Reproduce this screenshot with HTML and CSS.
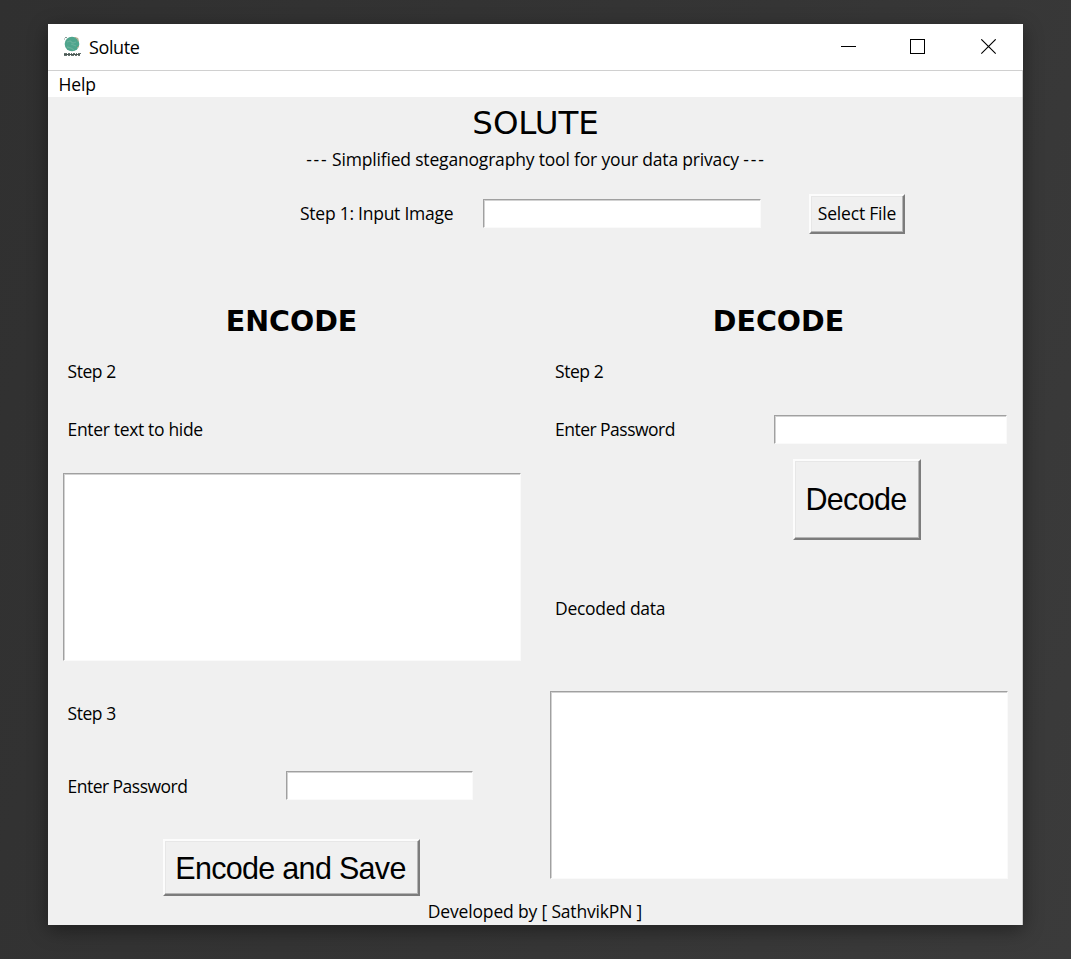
FILE: index.html
```html
<!DOCTYPE html>
<html lang="en">
<head>
<meta charset="utf-8">
<title>Solute</title>
<link rel="stylesheet" href="styles.css">
</head>
<body>
<main class="window">
  <header class="titlebar">
    <svg class="logo" width="18" height="22" viewBox="0 0 18 22" aria-hidden="true">
      <circle cx="9" cy="8" r="7.300" fill="#4fa58d"/>
      <path d="M4 6l3-1 3 2 3-1M4 11l4 1 3 2M8 8l5 2" stroke="#68b09a" stroke-width="1.300" fill="none"/>
      <path d="M12 1.500l3 1v3M14 12l2-2" stroke="#b3a383" stroke-width="1" fill="none"/>
      <path d="M2 1.500h2M1 3h1" stroke="#8b9b97" stroke-width="1"/>
      <path d="M1 17.500h3m1 0h2m1 0h1m1 0h2m1 0h1m1 0h3M1 19.500h3m1 0h2m1 0h3m1 0h2m1 0h2" stroke="#65736f" stroke-width="1"/>
      <path d="M1 18.500h16" stroke="#4b5854"/>
    </svg>
    <span class="title">Solute</span>
    <svg class="controls" width="158" height="16" viewBox="0 0 158 16" fill="none" stroke="#000" aria-hidden="true">
      <path d="M1 7.500h15M70.500 .500h14v14h-14z" shape-rendering="crispEdges"/>
      <path d="M141.300 .300l14.400 14.400M155.700 .300l-14.400 14.400" stroke-width="1.100"/>
    </svg>
  </header>
  <nav class="menu"><span class="help">Help</span></nav>
  <section class="content">
    <h1>SOLUTE</h1>
    <p class="tagline"><span class="dashes">---</span> Simplified steganography tool for your data privacy <span class="dashes">---</span></p>
    <div class="source">
      <span class="label source-label">Step 1: Input Image</span>
      <div class="field source-field"></div>
      <div class="button select"><span>Select File</span></div>
    </div>
    <div class="columns">
      <section class="column">
        <h2>ENCODE</h2>
        <p class="label step">Step 2</p>
        <p class="label prompt">Enter text to hide</p>
        <div class="field area encode-area"></div>
        <p class="label step-three">Step 3</p>
        <div class="row encode-row"><span class="label password">Enter Password</span><div class="field encode-password"></div></div>
        <div class="button encode"><span>Encode and Save</span></div>
      </section>
      <section class="column">
        <h2>DECODE</h2>
        <p class="label step right">Step 2</p>
        <div class="row decode-row"><span class="label password right">Enter Password</span><div class="field decode-password"></div></div>
        <div class="button decode"><span>Decode</span></div>
        <p class="label decoded right">Decoded data</p>
        <div class="field area decode-area"></div>
      </section>
    </div>
    <footer>Developed by [ SathvikPN ]</footer>
  </section>
</main>
</body>
</html>
```
FILE: styles.css
```css
* { box-sizing: border-box; }
html { height: 100%; }
body {
  margin: 0;
  height: 959px;
  padding: 24px 48px 34px;
  overflow: hidden;
  background: linear-gradient(110deg, #303030, #353535 55%, #3b3b3b);
  color: #000;
  font: 17.5px/24px "Open Sans", "Noto Sans", sans-serif;
}
h1, h2, p { margin: 0; }
.window {
  display: flex;
  flex-direction: column;
  width: 975px;
  height: 901px;
  background: #f0f0f0;
  box-shadow: 0 5px 18px rgba(0, 0, 0, .4);
}
.titlebar {
  display: flex;
  align-items: center;
  height: 47px;
  padding: 0 25px 1px 15px;
  background: #fff;
  border-bottom: 1px solid #d0d0d0;
}
.title { margin-left: 8px; font-size: 18px; letter-spacing: -.4px; }
.controls { margin-left: auto; }
.menu {
  height: 26px;
  padding: 1px 10.5px;
  background: #fff;
  border-right: 1px solid #d0d0d0;
}
.help { letter-spacing: -.1px; }
.content { height: 828px; border-right: 1px solid #c8c8c8; }
h1 {
  height: 38px;
  padding-top: 7px;
  padding-left: 1px;
  text-align: center;
  font: 32.5px/38px "DejaVu Sans", sans-serif;
  letter-spacing: -.1px;
}
.tagline { height: 24px; margin-top: 12px; text-align: center; letter-spacing: -.18px; }
.dashes { letter-spacing: 1.8px; margin-right: -1.8px; }
.dashes:first-child { margin-right: -.8px; }
.source {
  display: flex;
  align-items: center;
  height: 40px;
  margin: 23px 0 0 252px;
}
.label { letter-spacing: -.29px; white-space: nowrap; }
.source-label { width: 183px; padding-bottom: 2px; letter-spacing: -.25px; }
.field {
  background: #fff;
  border: 1px solid #fafafa;
  border-top-color: #a0a0a0;
  border-left-color: #a0a0a0;
  box-shadow: inset 1px 1px #d2d2d2;
}
.source-field { width: 278px; height: 29px; margin-top: -2px; }
.button {
  display: flex;
  align-items: center;
  justify-content: center;
  border: 2px solid;
  border-color: #fcfcfc #7c7c7c #7c7c7c #fcfcfc;
  box-shadow: inset -1px -1px #b5b5b5, inset 1px 1px #e7e7e7;
  white-space: nowrap;
  font: 30.5px/34px "Liberation Sans", Arial, sans-serif;
  letter-spacing: -.7px;
}
.select {
  width: 96px;
  height: 40px;
  margin-left: 48px;
  padding-bottom: 2px;
  font: 17.5px/24px "Open Sans", sans-serif;
  letter-spacing: -.2px;
}
.columns { display: grid; grid-template-columns: 487px 487px; height: 662px; margin-top: 67px; }
.column { padding: 0 15px; }
h2 {
  height: 38px;
  padding-top: 2px;
  text-align: center;
  font: bold 28.5px/38px "DejaVu Sans", sans-serif;
}
.step, .prompt, .step-three, .decoded { height: 24px; margin-left: 4.5px; }
.step { margin-top: 20px; letter-spacing: -.45px; }
.prompt { margin-top: 34px; letter-spacing: -.33px; }
.area { width: 458px; height: 188px; }
.encode-area { margin-top: 32px; }
.step-three { margin-top: 40px; letter-spacing: -.45px; }
.row { display: flex; align-items: center; height: 29px; }
.password { width: 220px; margin-left: 4.5px; letter-spacing: -.52px; }
.label.right { margin-left: 5px; }
.encode-row { margin-top: 46px; }
.encode-password { width: 187px; height: 29px; margin-left: -1.5px; }
.encode { width: 257px; height: 57px; margin: 39px 0 0 100px; padding-right: 2px; }
.decode-row { margin-top: 32px; }
.decode-row .password { padding-bottom: 2px; }
.decode-password { width: 233px; height: 29px; flex-shrink: 0; }
.decode { width: 128px; height: 81px; margin: 15px 0 0 243px; padding: 0 2px 2px 0; }
.decoded { margin-top: 56px; }
.decode-area { margin-top: 71px; }
footer { height: 24px; text-align: center; margin-top: -64px; letter-spacing: -.17px; }
```
